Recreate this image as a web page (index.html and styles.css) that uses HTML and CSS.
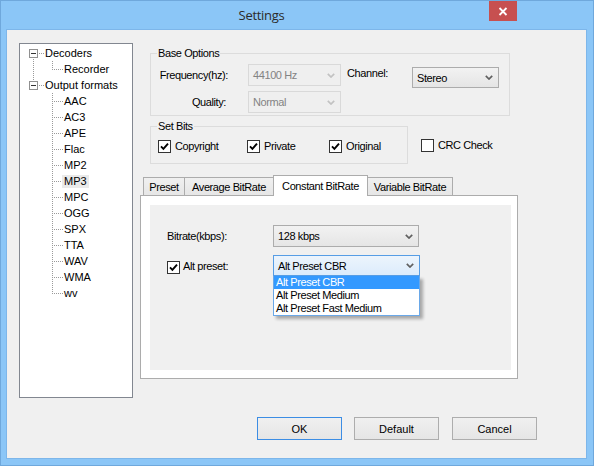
FILE: index.html
```html
<!DOCTYPE html>
<html>
<head>
<meta charset="utf-8">
<title>Settings</title>
<link rel="stylesheet" href="styles.css">
</head>
<body>
<div class="window">
  <div class="titlebar">
    <div class="title">Settings</div>
    <div class="close">
      <svg width="10" height="9" viewBox="0 0 10 9"><path d="M1.5 1 L8.5 8 M8.5 1 L1.5 8" stroke="#fff" stroke-width="1.8" fill="none"/></svg>
    </div>
  </div>
  <div class="client">
    <div class="main">
      <div class="tree">
        <div class="row"><svg width="25" height="16"><rect class="box" x="9.5" y="4.5" width="8" height="8"/><line class="minus" x1="11" y1="8.5" x2="16" y2="8.5"/><line class="dot" x1="19" y1="8.5" x2="25" y2="8.5"/><line class="dot" x1="13.5" y1="14" x2="13.5" y2="16"/></svg><span>Decoders</span></div>
        <div class="row"><svg width="44" height="16"><line class="dot" x1="13.5" y1="0" x2="13.5" y2="16"/><line class="dot" x1="32.5" y1="0" x2="32.5" y2="9"/><line class="dot" x1="34" y1="8.5" x2="43" y2="8.5"/></svg><span>Recorder</span></div>
        <div class="row"><svg width="25" height="16"><line class="dot" x1="13.5" y1="0" x2="13.5" y2="4"/><rect class="box" x="9.5" y="4.5" width="8" height="8"/><line class="minus" x1="11" y1="8.5" x2="16" y2="8.5"/><line class="dot" x1="19" y1="8.5" x2="25" y2="8.5"/></svg><span>Output formats</span></div>
        <div class="row"><svg width="44" height="16"><line class="dot" x1="32.5" y1="0" x2="32.5" y2="16"/><line class="dot" x1="34" y1="8.5" x2="43" y2="8.5"/></svg><span>AAC</span></div>
        <div class="row"><svg width="44" height="16"><line class="dot" x1="32.5" y1="0" x2="32.5" y2="16"/><line class="dot" x1="34" y1="8.5" x2="43" y2="8.5"/></svg><span>AC3</span></div>
        <div class="row"><svg width="44" height="16"><line class="dot" x1="32.5" y1="0" x2="32.5" y2="16"/><line class="dot" x1="34" y1="8.5" x2="43" y2="8.5"/></svg><span>APE</span></div>
        <div class="row"><svg width="44" height="16"><line class="dot" x1="32.5" y1="0" x2="32.5" y2="16"/><line class="dot" x1="34" y1="8.5" x2="43" y2="8.5"/></svg><span>Flac</span></div>
        <div class="row"><svg width="44" height="16"><line class="dot" x1="32.5" y1="0" x2="32.5" y2="16"/><line class="dot" x1="34" y1="8.5" x2="43" y2="8.5"/></svg><span>MP2</span></div>
        <div class="row"><svg width="44" height="16"><line class="dot" x1="32.5" y1="0" x2="32.5" y2="16"/><line class="dot" x1="34" y1="8.5" x2="43" y2="8.5"/></svg><span class="sel">MP3</span></div>
        <div class="row"><svg width="44" height="16"><line class="dot" x1="32.5" y1="0" x2="32.5" y2="16"/><line class="dot" x1="34" y1="8.5" x2="43" y2="8.5"/></svg><span>MPC</span></div>
        <div class="row"><svg width="44" height="16"><line class="dot" x1="32.5" y1="0" x2="32.5" y2="16"/><line class="dot" x1="34" y1="8.5" x2="43" y2="8.5"/></svg><span>OGG</span></div>
        <div class="row"><svg width="44" height="16"><line class="dot" x1="32.5" y1="0" x2="32.5" y2="16"/><line class="dot" x1="34" y1="8.5" x2="43" y2="8.5"/></svg><span>SPX</span></div>
        <div class="row"><svg width="44" height="16"><line class="dot" x1="32.5" y1="0" x2="32.5" y2="16"/><line class="dot" x1="34" y1="8.5" x2="43" y2="8.5"/></svg><span>TTA</span></div>
        <div class="row"><svg width="44" height="16"><line class="dot" x1="32.5" y1="0" x2="32.5" y2="16"/><line class="dot" x1="34" y1="8.5" x2="43" y2="8.5"/></svg><span>WAV</span></div>
        <div class="row"><svg width="44" height="16"><line class="dot" x1="32.5" y1="0" x2="32.5" y2="16"/><line class="dot" x1="34" y1="8.5" x2="43" y2="8.5"/></svg><span>WMA</span></div>
        <div class="row"><svg width="44" height="16"><line class="dot" x1="32.5" y1="0" x2="32.5" y2="9"/><line class="dot" x1="34" y1="8.5" x2="43" y2="8.5"/></svg><span>wv</span></div>
      </div>

      <div class="right">
        <div class="group base">
          <div class="legend">Base Options</div>
          <div class="frow r1">
            <div class="lbl l1">Frequency(hz):</div>
            <div class="combo disabled c1"><span>44100 Hz</span><svg viewBox="0 0 8 5"><path d="M0.8 0.8 L4 4 L7.2 0.8"/></svg></div>
            <div class="lbl chan">Channel:</div>
            <div class="combo c2"><span>Stereo</span><svg viewBox="0 0 8 5"><path d="M0.8 0.8 L4 4 L7.2 0.8"/></svg></div>
          </div>
          <div class="frow r2">
            <div class="lbl l2">Quality:</div>
            <div class="combo disabled c3"><span>Normal</span><svg viewBox="0 0 8 5"><path d="M0.8 0.8 L4 4 L7.2 0.8"/></svg></div>
          </div>
        </div>

        <div class="bitsrow">
          <div class="group bits">
            <div class="legend">Set Bits</div>
            <div class="checks">
              <div class="chk w1"><div class="cb"><svg viewBox="0 0 11 11"><path d="M2 5.4 L4.4 7.8 L9 2.6"/></svg></div><span>Copyright</span></div>
              <div class="chk w2"><div class="cb"><svg viewBox="0 0 11 11"><path d="M2 5.4 L4.4 7.8 L9 2.6"/></svg></div><span>Private</span></div>
              <div class="chk"><div class="cb"><svg viewBox="0 0 11 11"><path d="M2 5.4 L4.4 7.8 L9 2.6"/></svg></div><span>Original</span></div>
            </div>
          </div>
          <div class="chk crc"><div class="cb"></div><span>CRC Check</span></div>
        </div>

        <div class="tabs">
          <div class="tab t1">Preset</div>
          <div class="tab t2">Average BitRate</div>
          <div class="tab t3 active">Constant BitRate</div>
          <div class="tab t4">Variable BitRate</div>
        </div>
        <div class="panel">
          <div class="page">
            <div class="prow">
              <div class="plbl">Bitrate(kbps):</div>
              <div class="combo c4"><span>128 kbps</span><svg viewBox="0 0 8 5"><path d="M0.8 0.8 L4 4 L7.2 0.8"/></svg></div>
            </div>
            <div class="prow alt">
              <div class="plbl altlbl"><div class="cb"><svg viewBox="0 0 11 11"><path d="M2 5.4 L4.4 7.8 L9 2.6"/></svg></div><span>Alt preset:</span></div>
              <div class="dropwrap">
                <div class="combo focus c5"><span>Alt Preset CBR</span><svg viewBox="0 0 8 5"><path d="M0.8 0.8 L4 4 L7.2 0.8"/></svg></div>
                <div class="droplist">
                  <div class="item hi">Alt Preset CBR</div>
                  <div class="item">Alt Preset Medium</div>
                  <div class="item">Alt Preset Fast Medium</div>
                </div>
              </div>
            </div>
          </div>
        </div>
      </div>
    </div>

    <div class="buttons">
      <div class="btn def">OK</div>
      <div class="btn b2">Default</div>
      <div class="btn b3">Cancel</div>
    </div>
  </div>
</div>
</body>
</html>
```

FILE: styles.css
```css
* { box-sizing: border-box; }

body {
  margin: 0;
  font-family: "Liberation Sans", Arial, sans-serif;
  font-size: 11px;
  color: #000;
}

.window {
  width: 594px;
  height: 466px;
  background: #8bc6f7;
  border: 1px solid #6fa8dc;
  display: flex;
  flex-direction: column;
}

.titlebar {
  height: 29px;
  display: flex;
  align-items: flex-start;
  flex: none;
}

.title {
  margin-left: 33px;
  width: 455px;
  text-align: center;
  font-family: "Open Sans", "Noto Sans", sans-serif;
  font-size: 13px;
  letter-spacing: -0.3px;
  color: #2b2b2b;
  line-height: 28px;
}

.close {
  width: 28px;
  height: 20px;
  background: #c75050;
  display: flex;
  align-items: center;
  justify-content: center;
}
.close svg { display: block; }

.client {
  margin: 0 7px 7px 6px;
  flex: 1;
  background: #f0f0f0;
  box-shadow: 0 0 0 1px #7db6ea;
  padding: 13px 0 0 12px;
  display: flex;
  flex-direction: column;
}

.main {
  display: flex;
  align-items: flex-start;
}

/* tree */
.tree {
  width: 114px;
  height: 355px;
  background: #fff;
  border: 1px solid #828790;
  padding-top: 1px;
  flex: none;
}
.row {
  display: flex;
  align-items: center;
  height: 16px;
}
.row svg { display: block; flex: none; }
.row span {
  line-height: 13px;
  padding: 0 2px;
  margin-left: -2px;
  white-space: nowrap;
}
.row span.sel { background: #eaeaea; }
.dot {
  stroke: #9a9a9a;
  stroke-width: 1;
  stroke-dasharray: 1 1;
  shape-rendering: crispEdges;
}
.box { fill: #fdfdfd; stroke: #909090; shape-rendering: crispEdges; }
.minus { stroke: #333; stroke-width: 1; shape-rendering: crispEdges; }

/* right column */
.right {
  margin-left: 7px;
  width: 378px;
  letter-spacing: -0.4px;
}

.group {
  position: relative;
  border: 1px solid #dcdcdc;
}
.legend {
  position: absolute;
  top: -7px;
  left: 6px;
  padding: 0 1px;
  line-height: 13px;
  background: #f0f0f0;
  white-space: nowrap;
}

.base {
  margin-top: 10px;
  margin-left: 10px;
  width: 360px;
  height: 63px;
}
.frow { display: flex; align-items: flex-start; }
.r1 { margin-top: 10px; }
.r2 { margin-top: 3px; }
.lbl { white-space: nowrap; }
.l1 { width: 77px; text-align: right; line-height: 22px; }
.l2 { width: 75px; text-align: right; line-height: 22px; }
.chan { width: 65px; margin-left: 6px; line-height: 18px; }

.combo {
  display: flex;
  align-items: center;
  justify-content: space-between;
  border: 1px solid #acacac;
  background: linear-gradient(#f2f2f2, #e5e5e5);
  padding: 0 5px 0 4px;
  white-space: nowrap;
}
.combo svg {
  width: 8px;
  height: 5px;
  display: block;
}
.combo svg path {
  fill: none;
  stroke: #606060;
  stroke-width: 1.7;
}
.combo.disabled {
  border-color: #d9d9d9;
  background: #efefef;
  color: #838383;
}
.combo.disabled svg path { stroke: #c2c2c2; }
.combo.focus {
  border-color: #569de5;
  background: linear-gradient(#ecf4fc, #dcecfc);
}
.c1 { margin-left: 20px; width: 93px; height: 22px; }
.c2 { margin-top: 3px; width: 87px; height: 21px; }
.c3 { margin-left: 22px; width: 93px; height: 22px; }
.c4 { width: 146px; height: 22px; }
.c5 { width: 147px; height: 21px; }

.bitsrow {
  display: flex;
  align-items: flex-start;
  margin-top: 10px;
}
.bits {
  margin-left: 10px;
  width: 258px;
  height: 38px;
}
.checks {
  display: flex;
  margin-top: 13px;
  padding-left: 7px;
}
.chk {
  display: flex;
  align-items: center;
  white-space: nowrap;
}
.chk span { margin-left: 4px; line-height: 13px; }
.w1 { width: 89px; }
.w2 { width: 82px; }
.crc { margin-left: 13px; margin-top: 13px; }

.cb {
  width: 13px;
  height: 13px;
  border: 1px solid #333;
  background: #fff;
  flex: none;
  display: flex;
  align-items: center;
  justify-content: center;
}
.cb svg { width: 11px; height: 11px; display: block; }
.cb svg path {
  fill: none;
  stroke: #000;
  stroke-width: 1.9;
}

/* tabs */
.tabs {
  display: flex;
  align-items: flex-end;
  margin-top: 11px;
  padding-left: 3px;
}
.tab {
  height: 18px;
  border: 1px solid #acacac;
  border-bottom: none;
  background: linear-gradient(#f0f0f0, #e6e6e6);
  text-align: center;
  padding-top: 2px;
  line-height: 15px;
  white-space: nowrap;
  margin-left: -1px;
}
.t1 { width: 42px; margin-left: 0; }
.t2 { width: 90px; }
.t3 { width: 95px; }
.t4 { width: 86px; }
.tab.active {
  height: 21px;
  background: #fff;
  margin-bottom: -1px;
  padding-top: 0;
  line-height: 20px;
  position: relative;
  z-index: 2;
}

.panel {
  width: 378px;
  height: 184px;
  border: 1px solid #acacac;
  background: #fff;
  padding: 9px 6px 8px 9px;
  display: flex;
}
.page {
  flex: 1;
  background: #f0f0f0;
  position: relative;
  padding: 20px 0 0 17px;
}
.prow {
  display: flex;
  align-items: flex-start;
}
.plbl {
  width: 106px;
  line-height: 22px;
  white-space: nowrap;
}
.alt { margin-top: 8px; }
.altlbl {
  display: flex;
  align-items: flex-start;
}
.altlbl .cb { margin-top: 6px; }
.altlbl span { margin-left: 3px; line-height: 23px; }

.dropwrap {
  position: relative;
  width: 147px;
  height: 21px;
}
.droplist {
  position: absolute;
  top: 21px;
  left: 0;
  width: 147px;
  background: #fff;
  border: 1px solid #6aa8e8;
  border-top: none;
  box-shadow: 3px 3px 3px rgba(0, 0, 0, 0.3);
  z-index: 3;
}
.item {
  line-height: 13px;
  height: 13px;
  padding-left: 2px;
  white-space: nowrap;
}
.item.hi {
  background: #3399ff;
  color: #fff;
}

/* buttons */
.buttons {
  display: flex;
  justify-content: flex-end;
  margin-top: 19px;
  padding-right: 49px;
}
.btn {
  width: 85px;
  height: 23px;
  border: 1px solid #adadad;
  background: linear-gradient(#f0f0f0, #e5e5e5);
  display: flex;
  align-items: center;
  justify-content: center;
}
.btn.def { border-color: #3c8de4; }
.b2 { margin-left: 12px; }
.b3 { margin-left: 13px; }
```
